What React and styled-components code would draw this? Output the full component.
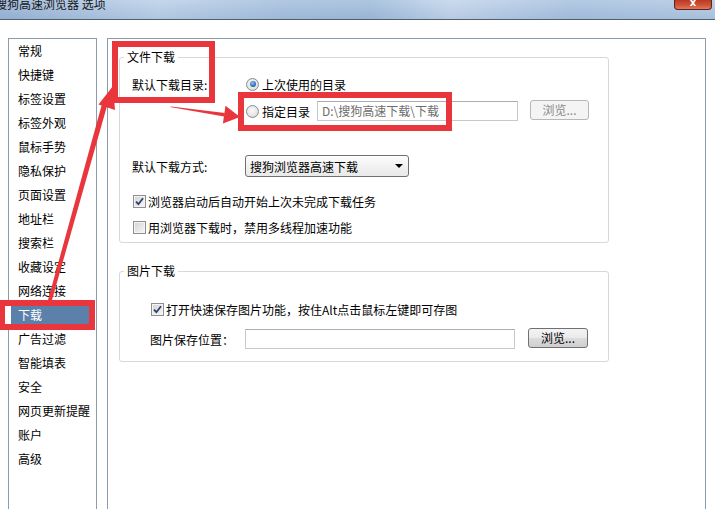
import React from "react";
import styled, { createGlobalStyle } from "styled-components";

const Global = createGlobalStyle`
  html, body { margin: 0; padding: 0; background: #fff; }
  body {
    font-family: "Noto Sans CJK SC", "Liberation Sans", sans-serif;
    font-size: 12px;
    color: #000;
  }
`;

const Window = styled.div`
  position: relative;
  width: 715px;
  height: 509px;
  overflow: hidden;
  background: #fff;
  display: flex;
  flex-direction: column;
`;

const TitleBar = styled.div`
  height: 19px;
  flex: none;
  border-bottom: 1px solid #4f5f72;
  background:
    linear-gradient(to bottom, rgba(255,255,255,0.12), rgba(40,70,110,0.08)),
    linear-gradient(to right, #9cb7d8 0%, #bcd1e9 22%, #a7c1df 40%, #a3bedd 52%, #c3d6ec 63%, #aac3e1 80%, #b3cae5 100%);
  display: flex;
  align-items: flex-start;
  justify-content: space-between;
  overflow: hidden;
`;

const Title = styled.span`
  margin: -4px 0 0 -5px;
  font-size: 12px;
  line-height: 16px;
  color: #151515;
  white-space: nowrap;
`;

const CloseButton = styled.div`
  width: 36px;
  height: 9px;
  margin-right: 3px;
  border: 1px solid #5b2418;
  border-top: none;
  border-radius: 0 0 4px 4px;
  background: linear-gradient(to bottom, #b93a22, #d0553a 60%, #e27b5e);
  color: #fff;
  font-family: "DejaVu Sans", sans-serif;
  font-weight: bold;
  font-size: 10px;
  line-height: 6px;
  display: flex;
  justify-content: center;
  align-items: flex-start;
  overflow: hidden;
`;

const Body = styled.div`
  flex: 1;
  min-height: 0;
  display: flex;
  gap: 10px;
  padding: 18px 9px 0 8px;
`;

const Sidebar = styled.ul`
  list-style: none;
  margin: 0;
  padding: 0;
  width: 87px;
  flex: none;
  border: 1px solid #8c9cab;
  border-bottom: none;
`;

const NavItem = styled.li`
  height: 24px;
  line-height: 24px;
  padding-left: ${(p) => (p.$active ? "7px" : "9px")};
  margin: ${(p) => (p.$active ? "0 3px 0 2px" : "0")};
  background: ${(p) => (p.$active ? "#5b80aa" : "transparent")};
  color: ${(p) => (p.$active ? "#fff" : "#000")};
  white-space: nowrap;
`;

const Main = styled.div`
  flex: 1;
  border: 1px solid #8c9cab;
  border-bottom: none;
  padding: 18px 0 0 11px;
`;

const Group = styled.section`
  position: relative;
  box-sizing: border-box;
  width: 490px;
  border: 1px solid #d8d8d8;
  border-radius: 3px;
  margin-top: ${(p) => p.$mt || 0}px;
  padding: ${(p) => p.$pad};
  display: flex;
  flex-direction: column;
`;

const Legend = styled.span`
  position: absolute;
  top: -8px;
  left: 4px;
  padding: 0 3px;
  background: #fff;
  line-height: 14px;
`;

const Row = styled.div`
  display: flex;
  align-items: center;
  height: ${(p) => p.$h || 20}px;
  margin-top: ${(p) => p.$mt || 0}px;
  margin-left: ${(p) => p.$ml || 0}px;
  white-space: nowrap;
`;

const Label = styled.span`
  width: ${(p) => p.$w}px;
  flex: none;
`;

const Radio = styled.span`
  width: 11px;
  height: 11px;
  flex: none;
  border-radius: 50%;
  border: 1px solid #8a8c8e;
  background: radial-gradient(circle at 45% 40%, #fbfbfb 0%, #e4e4e4 60%, #cfcfcf 100%);
  display: flex;
  align-items: center;
  justify-content: center;
  margin-right: 3px;
  &::after {
    content: "";
    display: ${(p) => (p.$checked ? "block" : "none")};
    width: 6px;
    height: 6px;
    border-radius: 50%;
    background: radial-gradient(circle at 40% 35%, #8fc4f0 0%, #2f74c0 55%, #173f78 100%);
  }
`;

const CheckBox = styled.span`
  width: 11px;
  height: 11px;
  flex: none;
  border: 1px solid #8f8f8f;
  background: linear-gradient(135deg, #d2d2d2 0%, #e9e9e9 60%, #f6f6f6 100%);
  margin: 0 2px 0 ${(p) => p.$ml || 0}px;
  display: flex;
  align-items: center;
  justify-content: center;
  box-shadow: inset 0 0 0 1px #f4f4f4;
`;

const TextInput = styled.div`
  width: ${(p) => p.$w}px;
  height: 20px;
  box-sizing: border-box;
  flex: none;
  border: 1px solid #c7c9cc;
  border-top-color: #abadb3;
  background: #fff;
  color: #6d6d6d;
  padding-left: 4px;
  line-height: 18px;
  margin-left: ${(p) => p.$ml || 0}px;
  overflow: hidden;
`;

const Button = styled.div`
  width: ${(p) => p.$w}px;
  height: 20px;
  box-sizing: border-box;
  flex: none;
  margin-left: ${(p) => p.$ml}px;
  margin-top: -2px;
  border: 1px solid ${(p) => (p.$disabled ? "#b4b8bb" : "#707070")};
  border-radius: 3px;
  background: ${(p) =>
    p.$disabled
      ? "#f4f4f4"
      : "linear-gradient(to bottom, #f3f3f3 0%, #ebebeb 48%, #dcdcdc 52%, #cfcfcf 100%)"};
  color: ${(p) => (p.$disabled ? "#8a8a8a" : "#000")};
  display: flex;
  align-items: center;
  justify-content: center;
  line-height: 18px;
`;

const Select = styled.div`
  width: 164px;
  height: 22px;
  box-sizing: border-box;
  border: 1px solid #707070;
  border-radius: 3px;
  background: linear-gradient(to bottom, #fdfdfd 0%, #f2f2f2 50%, #e9e9e9 100%);
  display: flex;
  align-items: center;
  justify-content: space-between;
  padding: 0 5px 0 4px;
`;

const Caret = styled.span`
  width: 0;
  height: 0;
  border-left: 4px solid transparent;
  border-right: 4px solid transparent;
  border-top: 4px solid #000;
`;

const Overlay = styled.svg`
  position: absolute;
  left: 0;
  top: 0;
  pointer-events: none;
`;

const Check = () => (
  <svg width="9" height="9" viewBox="0 0 9 9">
    <path d="M1 4.6 L3.4 7.2 L8 1.2" fill="none" stroke="#2a3f72" strokeWidth="1.8" />
  </svg>
);

const navItems = [
  "常规", "快捷键", "标签设置", "标签外观", "鼠标手势", "隐私保护", "页面设置",
  "地址栏", "搜索栏", "收藏设定", "网络连接", "下载", "广告过滤", "智能填表",
  "安全", "网页更新提醒", "账户", "高级",
];

const RED = "#e8363c";

export default function App() {
  return (
    <>
      <Global />
      <Window>
        <TitleBar>
          <Title>搜狗高速浏览器 选项</Title>
          <CloseButton>x</CloseButton>
        </TitleBar>
        <Body>
          <Sidebar>
            {navItems.map((n) => (
              <NavItem key={n} $active={n === "下载"}>{n}</NavItem>
            ))}
          </Sidebar>
          <Main>
            <Group $pad="16px 0 7px 12px">
              <Legend>文件下载</Legend>
              <Row>
                <Label $w={114}>默认下载目录:</Label>
                <Radio $checked />
                <span>上次使用的目录</span>
              </Row>
              <Row $mt={7} $ml={114}>
                <Radio />
                <span>指定目录</span>
                <TextInput $w={201} $ml={7}>D:\搜狗高速下载\下载</TextInput>
                <Button $w={59} $ml={12} $disabled>浏览...</Button>
              </Row>
              <Row $h={22} $mt={34}>
                <Label $w={113}>默认下载方式:</Label>
                <Select>
                  <span>搜狗浏览器高速下载</span>
                  <Caret />
                </Select>
              </Row>
              <Row $h={16} $mt={16}>
                <CheckBox $ml={1}><Check /></CheckBox>
                <span>浏览器启动后自动开始上次未完成下载任务</span>
              </Row>
              <Row $h={16} $mt={10}>
                <CheckBox $ml={1} />
                <span>用浏览器下载时，禁用多线程加速功能</span>
              </Row>
            </Group>
            <Group $mt={28} $pad="29px 0 11px 30px">
              <Legend>图片下载</Legend>
              <Row $h={16}>
                <CheckBox $ml={1}><Check /></CheckBox>
                <span>打开快速保存图片功能，按住Alt点击鼠标左键即可存图</span>
              </Row>
              <Row $h={22} $mt={11}>
                <Label $w={95}>图片保存位置：</Label>
                <TextInput $w={270} />
                <Button $w={60} $ml={13}>浏览...</Button>
              </Row>
            </Group>
          </Main>
        </Body>
        <Overlay width="715" height="509" viewBox="0 0 715 509">
          <rect x="5" y="306" width="5" height="18" fill="#fff" />
          <rect x="115" y="44" width="97" height="56" fill="none" stroke={RED} strokeWidth="6" />
          <rect x="241" y="95" width="208" height="33" fill="none" stroke={RED} strokeWidth="6" />
          <rect x="2" y="303" width="90" height="24" fill="none" stroke={RED} strokeWidth="6" />
          <polygon points="170,107 171,106.5 225,113 224,116.5" fill={RED} />
          <polygon points="240,117 222.9,123.6 225.5,105.8" fill={RED} />
          <polygon points="48,300 52,300 107,106 102,104" fill={RED} />
          <polygon points="113,86 115,110 98.5,104.5" fill={RED} />
        </Overlay>
      </Window>
    </>
  );
}
